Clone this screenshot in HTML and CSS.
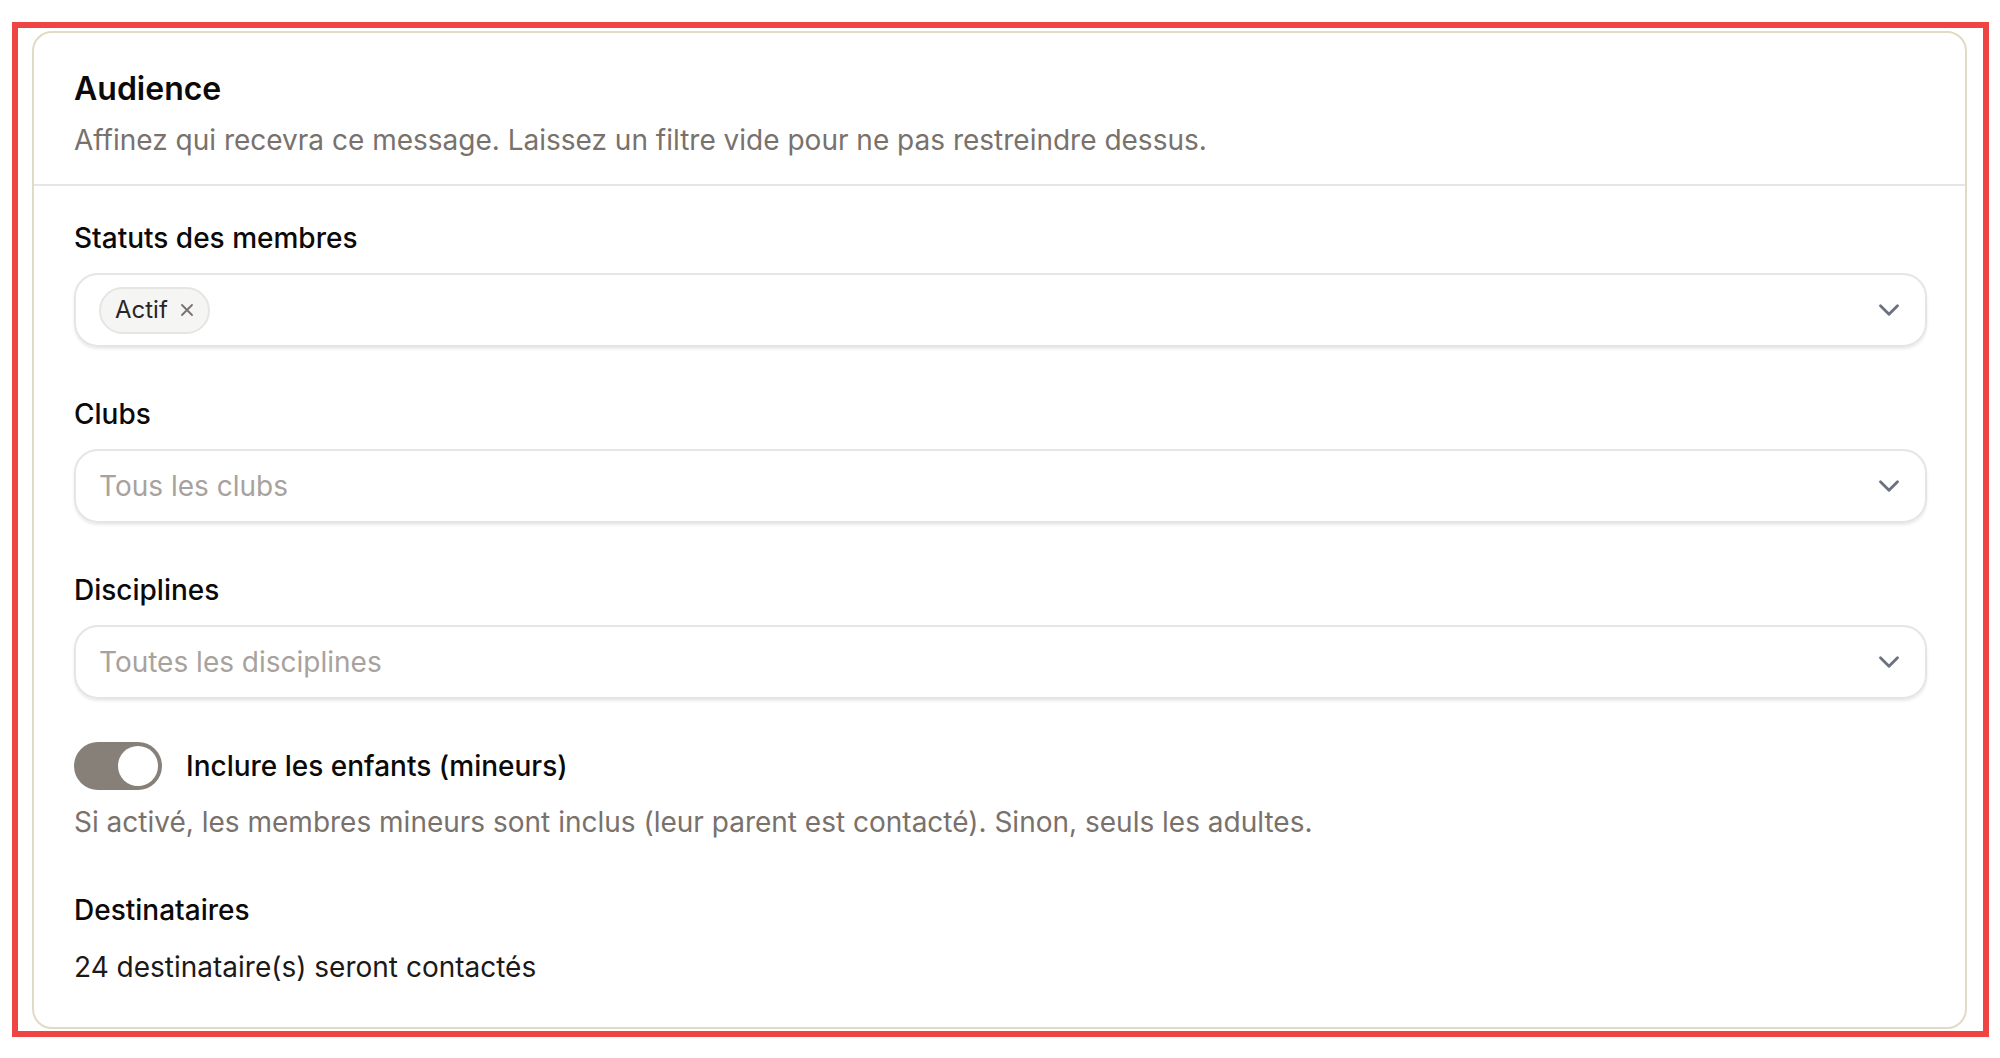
FILE: index.html
```html
<!DOCTYPE html>
<html lang="fr">
<head>
<meta charset="utf-8">
<title>Audience</title>
<link rel="stylesheet" href="styles.css">
</head>
<body>
<div class="frame">
  <section class="card">
    <header class="card-header">
      <h2 class="title">Audience</h2>
      <p class="subtitle">Affinez qui recevra ce message. Laissez un filtre vide pour ne pas restreindre dessus.</p>
    </header>
    <div class="card-body">
      <div class="field">
        <div class="label">Statuts des membres</div>
        <div class="select">
          <div class="select-value">
            <span class="chip">Actif
              <svg class="chip-x" viewBox="0 0 24 24" width="20" height="20" aria-hidden="true"><path d="M6 6l12 12M18 6L6 18" fill="none" stroke="currentColor" stroke-width="2.2" stroke-linecap="round"/></svg>
            </span>
          </div>
          <svg class="chevron" viewBox="0 0 24 24" width="34" height="34" aria-hidden="true"><path d="m6 9 6 6 6-6" fill="none" stroke="currentColor" stroke-width="2" stroke-linecap="round" stroke-linejoin="round"/></svg>
        </div>
      </div>
      <div class="field">
        <div class="label">Clubs</div>
        <div class="select">
          <div class="select-value placeholder">Tous les clubs</div>
          <svg class="chevron" viewBox="0 0 24 24" width="34" height="34" aria-hidden="true"><path d="m6 9 6 6 6-6" fill="none" stroke="currentColor" stroke-width="2" stroke-linecap="round" stroke-linejoin="round"/></svg>
        </div>
      </div>
      <div class="field">
        <div class="label">Disciplines</div>
        <div class="select">
          <div class="select-value placeholder">Toutes les disciplines</div>
          <svg class="chevron" viewBox="0 0 24 24" width="34" height="34" aria-hidden="true"><path d="m6 9 6 6 6-6" fill="none" stroke="currentColor" stroke-width="2" stroke-linecap="round" stroke-linejoin="round"/></svg>
        </div>
      </div>
      <div class="toggle-row">
        <span class="toggle" role="switch" aria-checked="true"><span class="knob"></span></span>
        <span class="toggle-label">Inclure les enfants (mineurs)</span>
      </div>
      <p class="help">Si activé, les membres mineurs sont inclus (leur parent est contacté). Sinon, seuls les adultes.</p>
      <div class="label recipients">Destinataires</div>
      <p class="count">24 destinataire(s) seront contactés</p>
    </div>
  </section>
</div>
</body>
</html>
```

FILE: styles.css
```css
* { box-sizing: border-box; }

html, body {
  margin: 0;
  padding: 0;
  background: #ffffff;
}

body {
  font-family: "Inter", "Noto Sans", "Liberation Sans", sans-serif;
  color: #0c0a09;
}

.frame {
  margin: 22px 0 0 12px;
  width: 1977px;
  border: 6px solid #ef4444;
  padding: 3px 16px 2px 14px;
}

.card {
  background: #ffffff;
  border: 2px solid #e3dac6;
  border-radius: 20px;
}

.card-header {
  padding: 36px 38px 26px 40px;
  border-bottom: 2px solid #e7e5e4;
}

.title {
  margin: 0;
  font-size: 32px;
  line-height: 40px;
  font-weight: 600;
  color: #0c0a09;
}

.subtitle {
  margin: 13px 0 0;
  font-size: 28px;
  line-height: 36px;
  color: #78716c;
}

.card-body {
  padding: 34px 38px 42px 40px;
}

.field + .field {
  margin-top: 49px;
}

.label {
  font-size: 28px;
  line-height: 36px;
  font-weight: 500;
  color: #0c0a09;
}

.select {
  margin-top: 17px;
  height: 74px;
  border: 2px solid #e5e5e5;
  border-radius: 24px;
  box-shadow: 0 2px 3px rgba(0, 0, 0, 0.09);
  padding: 0 19px 0 23px;
  display: flex;
  align-items: center;
  justify-content: space-between;
}

.select-value {
  font-size: 28px;
  line-height: 36px;
  color: #1c1917;
  display: flex;
  align-items: center;
}

.select-value.placeholder {
  color: #a8a29e;
}

.chip {
  display: inline-flex;
  align-items: center;
  gap: 9px;
  height: 47px;
  padding: 0 11px 0 14px;
  border: 2px solid #e7e5e4;
  border-radius: 999px;
  background: #f5f5f4;
  font-size: 24px;
  color: #292524;
}

.chip-x {
  color: #78716c;
}

.chevron {
  color: #6b7280;
  flex: none;
}

.toggle-row {
  margin-top: 43px;
  display: flex;
  align-items: center;
  gap: 24px;
}

.toggle {
  width: 88px;
  height: 48px;
  padding: 4px;
  border-radius: 24px;
  background: #878079;
  display: flex;
  justify-content: flex-end;
  flex: none;
}

.knob {
  width: 40px;
  height: 40px;
  border-radius: 50%;
  background: #ffffff;
}

.toggle-label {
  font-size: 28px;
  line-height: 36px;
  font-weight: 500;
  color: #0c0a09;
}

.help {
  margin: 14px 0 0;
  font-size: 28px;
  line-height: 36px;
  color: #78716c;
}

.recipients {
  margin-top: 52px;
}

.count {
  margin: 21px 0 0;
  font-size: 28px;
  line-height: 36px;
  color: #1c1917;
}
```
